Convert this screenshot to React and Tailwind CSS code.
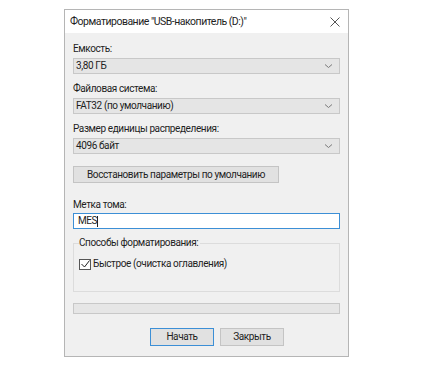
import React from "react";

const font = { fontFamily: 'Roboto, "Noto Sans", sans-serif' };
const txt = "text-[10px] tracking-[-0.4px] text-[#1e1e1e]";

function Chevron() {
	return (
		<svg width="9" height="6" viewBox="0 0 9 6" className="shrink-0">
			<path d="M1 1.5 L4.5 4.5 L8 1.5" fill="none" stroke="#7a7a7a" strokeWidth="1" />
		</svg>
	);
}

function Combo({ value }) {
	return (
		<div className={`h-[16px] flex items-center justify-between pl-[2px] pr-[6px] bg-[#e5e5e5] border border-[#c8c8c8] leading-none ${txt}`}>
			<span>{value}</span>
			<Chevron />
		</div>
	);
}

function Label({ children, className = "" }) {
	return <div className={`h-[14px] leading-[14px] ${txt} ${className}`}>{children}</div>;
}

export default function App() {
	return (
		<div className="w-[424px] h-[372px] bg-white pt-[9px] pl-[64px]" style={font}>
			<div className="w-[285px] h-[348px] border border-[#b5b5b5] bg-[#f0f0f0] flex flex-col">
				<div className="h-[23px] bg-white flex items-center justify-between pl-[5px] pr-[8px]">
					<span className="text-[10.5px] tracking-[-0.5px] text-[#1e1e1e]">Форматирование "USB-накопитель (D:)"</span>
					<svg width="10" height="10" viewBox="0 0 10 10">
						<path d="M0.5 0.5 L9.5 9.5 M9.5 0.5 L0.5 9.5" stroke="#555" strokeWidth="1" />
					</svg>
				</div>
				<div className="px-[8px] flex flex-col">
					<Label className="mt-[9px]">Емкость:</Label>
					<div className="mt-[2px]">
						<Combo value="3,80 ГБ" />
					</div>
					<Label className="mt-[8px]">Файловая система:</Label>
					<div className="mt-[2px]">
						<Combo value="FAT32 (по умолчанию)" />
					</div>
					<Label className="mt-[8px]">Размер единицы распределения:</Label>
					<div className="mt-[2px]">
						<Combo value="4096 байт" />
					</div>
					<button
						type="button"
						className={`mt-[12px] w-[206px] h-[17px] bg-[#e1e1e1] border border-[#c4c4c4] leading-none whitespace-nowrap ${txt}`}
					>
						Восстановить параметры по умолчанию
					</button>
					<Label className="mt-[15px]">Метка тома:</Label>
					<div className={`mt-[1px] h-[16px] bg-white border border-[#3c8fd6] flex items-center pl-[4px] leading-none ${txt}`}>
						MES<span className="inline-block w-px h-[11px] bg-[#222]" />
					</div>
					<div className="mt-[14px] h-[49px] border border-[#dcdcdc] relative px-[5px]">
						<div className={`absolute -top-[8px] left-[5px] bg-[#f0f0f0] pr-[2px] leading-[14px] ${txt}`}>
							Способы форматирования:
						</div>
						<div className="mt-[13px] flex items-center gap-[2px]">
							<div className="w-[12px] h-[11px] bg-white border border-[#555] flex items-center justify-center">
								<svg width="9" height="8" viewBox="0 0 9 8">
									<path d="M0.5 4 L3.5 7 L8.5 0.5" fill="none" stroke="#222" strokeWidth="1" />
								</svg>
							</div>
							<span className={`leading-[14px] ${txt}`}>Быстрое (очистка оглавления)</span>
						</div>
					</div>
					<div className="mt-[11px] h-[11px] bg-[#e6e6e6] border border-[#c8c8c8]" />
					<div className="mt-[14px] flex justify-center gap-[6px] pl-[21px]">
						<button
							type="button"
							className={`w-[64px] h-[18px] bg-[#e1e1e1] border border-[#3c8fd6] leading-none ${txt}`}
						>
							Начать
						</button>
						<button
							type="button"
							className={`w-[64px] h-[18px] bg-[#e1e1e1] border border-[#c4c4c4] leading-none ${txt}`}
						>
							Закрыть
						</button>
					</div>
				</div>
			</div>
		</div>
	);
}
